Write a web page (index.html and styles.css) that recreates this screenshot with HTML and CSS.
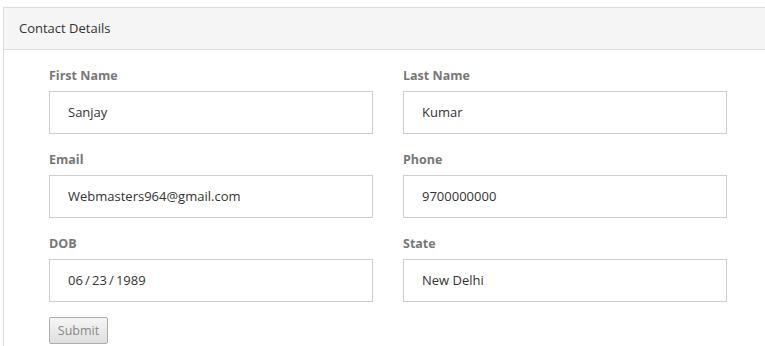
FILE: index.html
```html
<!DOCTYPE html>
<html>
<head>
<meta charset="utf-8">
<link rel="stylesheet" href="styles.css">
</head>
<body>
<div class="page">
  <div class="panel">
    <div class="panel-heading">Contact Details</div>
    <form class="panel-body">
      <div class="grid">
        <div class="field">
          <label class="label">First Name</label>
          <div class="input">Sanjay</div>
        </div>
        <div class="field">
          <label class="label">Last Name</label>
          <div class="input">Kumar</div>
        </div>
        <div class="field">
          <label class="label">Email</label>
          <div class="input">Webmasters964@gmail.com</div>
        </div>
        <div class="field">
          <label class="label">Phone</label>
          <div class="input">9700000000</div>
        </div>
        <div class="field">
          <label class="label">DOB</label>
          <div class="input">06&thinsp;/&thinsp;23&thinsp;/&thinsp;1989</div>
        </div>
        <div class="field">
          <label class="label">State</label>
          <div class="input">New Delhi</div>
        </div>
      </div>
      <button type="button" class="btn">Submit</button>
    </form>
  </div>
</div>
</body>
</html>
```
FILE: styles.css
```css
html, body {
  margin: 0;
  padding: 0;
  background: #fff;
}
body {
  font-family: "Open Sans", "Noto Sans", sans-serif;
  color: #333;
}
.page {
  padding: 7px 0 0 3px;
  height: 346px;
  box-sizing: border-box;
  overflow: hidden;
}
.panel {
  border-top: 1px solid #dcdcdc;
  border-left: 1px solid #dcdcdc;
  height: 100%;
}
.panel-heading {
  height: 42px;
  box-sizing: border-box;
  background: #f5f5f5;
  border-bottom: 1px solid #dcdcdc;
  padding-left: 15px;
  font-size: 13px;
  line-height: 41px;
  color: #333;
}
.panel-body {
  padding: 17px 0 0 45px;
  display: block;
}
.grid {
  display: grid;
  grid-template-columns: 324px 324px;
  column-gap: 30px;
  row-gap: 17px;
}
.field {
  display: flex;
  flex-direction: column;
}
.label {
  font-size: 12.5px;
  font-weight: bold;
  color: #777;
  line-height: 18px;
  margin-bottom: 6px;
}
.input {
  height: 43px;
  box-sizing: border-box;
  border: 1px solid #cfcfcf;
  padding-left: 18px;
  font-size: 13px;
  line-height: 41px;
  color: #333;
}
.btn {
  margin-top: 15px;
  width: 59px;
  height: 27px;
  border: 1px solid #adadad;
  border-radius: 2px;
  background: linear-gradient(#f6f6f6, #dedede);
  color: #888;
  font-family: "Open Sans", "Noto Sans", sans-serif;
  font-size: 12.5px;
  padding: 0;
}
```
